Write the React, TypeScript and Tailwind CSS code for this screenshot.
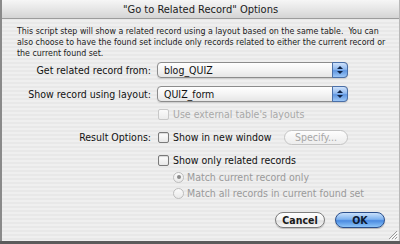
import React from "react";

const font = { fontFamily: '"DejaVu Sans Condensed", "DejaVu Sans", sans-serif' };

function Popup({ value }: { value: string }) {
  return (
    <div className="relative flex h-[16px] w-[191px] items-center rounded-[4px] border border-[#8c8c8c] bg-[linear-gradient(180deg,#ffffff_0%,#f4f4f4_50%,#e6e6e6_100%)] shadow-[0_1px_1px_rgba(0,0,0,0.12)]">
      <span className="pl-[6px] text-[10.5px] leading-none text-[#111]">{value}</span>
      <div className="absolute right-[-1px] top-[-1px] flex h-[16px] w-[16px] flex-col items-center justify-center gap-[2px] rounded-r-[4px] border border-[#4a6fa8] bg-[linear-gradient(180deg,#cfe2fb_0%,#8fb8ee_45%,#5f96e0_55%,#9cc6f6_100%)]">
        <svg width="6" height="3" viewBox="0 0 6 3"><path d="M0 3 L3 0 L6 3 Z" fill="#0f2345" /></svg>
        <svg width="6" height="3" viewBox="0 0 6 3"><path d="M0 0 L3 3 L6 0 Z" fill="#0f2345" /></svg>
      </div>
    </div>
  );
}

function Check({ disabled }: { disabled?: boolean }) {
  return (
    <div
      className={
        disabled
          ? "h-[11px] w-[11px] shrink-0 rounded-[2px] border border-[#c8c8c8] bg-[linear-gradient(180deg,#fafafa,#ececec)]"
          : "h-[11px] w-[11px] shrink-0 rounded-[2px] border border-[#7a7a7a] bg-[linear-gradient(180deg,#ffffff,#e8e8e8)] shadow-[inset_0_1px_1px_rgba(0,0,0,0.15)]"
      }
    />
  );
}

function Radio({ on }: { on?: boolean }) {
  return (
    <div className="flex h-[11px] w-[11px] shrink-0 items-center justify-center rounded-full border border-[#bdbdbd] bg-[linear-gradient(180deg,#fbfbfb,#e9e9e9)]">
      {on && <div className="h-[4px] w-[4px] rounded-full bg-[#8a8a8a]" />}
    </div>
  );
}

export default function App() {
  return (
    <div className="h-[244px] w-[400px] overflow-hidden bg-[#5b5b5b]" style={font}>
      <div className="flex h-[241px] w-[400px] flex-col border-l-2 border-r border-l-[#8a8a8a] border-r-[#b8b8b8] bg-[repeating-linear-gradient(180deg,#efefef_0px,#efefef_2px,#e8e8e8_2px,#e8e8e8_4px)]">
        {/* title bar */}
        <div className="flex h-[19px] shrink-0 items-center justify-center border-b border-[#9c9c9c] bg-[linear-gradient(180deg,#f6f6f6_0%,#e6e6e6_50%,#d4d4d4_100%)]">
          <span className="text-[11px] leading-none text-[#1a1a1a]">"Go to Related Record" Options</span>
        </div>

        {/* description */}
        <div className="pl-[15px] pr-[11px] pt-[7px] text-[8.8px] leading-[11px] text-[#1a1a1a]">
          This script step will show a related record using a layout based on the same table.&nbsp; You can also choose to have the found set include only records related to either the current record or the current found set.
        </div>

        {/* form */}
        <div className="mt-[3px] flex flex-col text-[10.5px] leading-none text-[#111]">
          <div className="flex h-[16px] items-center">
            <div className="w-[149px] text-right">Get related record from:</div>
            <div className="ml-[6px]"><Popup value="blog_QUIZ" /></div>
          </div>
          <div className="mt-[8px] flex h-[16px] items-center">
            <div className="w-[149px] text-right">Show record using layout:</div>
            <div className="ml-[6px]"><Popup value="QUIZ_form" /></div>
          </div>
          <div className="mt-[5px] flex h-[14px] items-center">
            <div className="w-[149px]" />
            <div className="ml-[7px] flex items-center gap-[4px] text-[#a8a8a8]">
              <Check disabled />
              <span>Use external table's layouts</span>
            </div>
          </div>
          <div className="mt-[8px] flex h-[16px] items-center">
            <div className="w-[149px] text-right">Result Options:</div>
            <div className="ml-[7px] flex w-[190px] items-center">
              <div className="flex items-center gap-[4px]">
                <Check />
                <span>Show in new window</span>
              </div>
              <div className="ml-auto flex h-[15px] w-[64px] items-center justify-center rounded-full border border-[#c4c4c4] bg-[linear-gradient(180deg,#fdfdfd,#ededed)] text-[#a6a6a6]">
                Specify...
              </div>
            </div>
          </div>
          <div className="mt-[8px] flex h-[14px] items-center">
            <div className="w-[149px]" />
            <div className="ml-[7px] flex items-center gap-[4px]">
              <Check />
              <span>Show only related records</span>
            </div>
          </div>
          <div className="mt-[3px] flex h-[14px] items-center">
            <div className="w-[149px]" />
            <div className="ml-[22px] flex items-center gap-[3px] text-[#9a9a9a]">
              <Radio on />
              <span>Match current record only</span>
            </div>
          </div>
          <div className="mt-[2px] flex h-[14px] items-center">
            <div className="w-[149px]" />
            <div className="ml-[22px] flex items-center gap-[3px] text-[#9a9a9a]">
              <Radio />
              <span>Match all records in current found set</span>
            </div>
          </div>
        </div>

        {/* buttons */}
        <div className="mt-[12px] flex justify-end gap-[10px] pr-[14px]">
          <div className="flex h-[16px] w-[50px] items-center justify-center rounded-full border border-[#7d7d7d] bg-[linear-gradient(180deg,#ffffff_0%,#f1f1f1_50%,#e0e0e0_55%,#f6f6f6_100%)] text-[10.5px] font-semibold leading-none text-[#1a1a1a] shadow-[0_1px_1px_rgba(0,0,0,0.2)]">
            Cancel
          </div>
          <div className="flex h-[16px] w-[50px] items-center justify-center rounded-full border border-[#2b4f8c] bg-[linear-gradient(180deg,#c9e0fb_0%,#7eb2ef_45%,#4a8ae0_55%,#8cc4f8_100%)] text-[10.5px] font-semibold leading-none text-[#0d1a33] shadow-[0_1px_1px_rgba(0,0,0,0.25)]">
            OK
          </div>
        </div>

        {/* resize grip */}
        <div className="mt-auto flex justify-end pb-[1px] pr-[1px]">
          <svg width="10" height="10" viewBox="0 0 10 10">
            <path d="M9 1 L1 9 M9 4 L4 9 M9 7 L7 9" stroke="#9a9a9a" strokeWidth="1" />
            <path d="M10 2 L2 10 M10 5 L5 10 M10 8 L8 10" stroke="#ffffff" strokeWidth="1" />
          </svg>
        </div>
      </div>
    </div>
  );
}
